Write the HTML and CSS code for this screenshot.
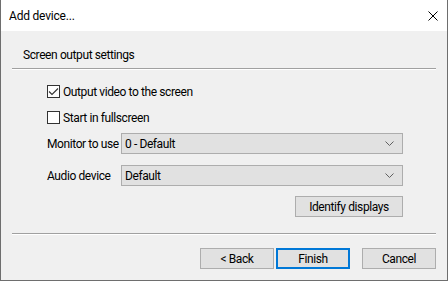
FILE: index.html
```html
<!DOCTYPE html>
<html>
<head>
<meta charset="utf-8">
<link rel="stylesheet" href="styles.css">
</head>
<body>
<div class="window">
  <div class="titlebar">
    <span class="title">Add device...</span>
    <svg class="close" width="10" height="10" viewBox="0 0 10 10"><path d="M0.5 0.5 L9.5 9.5 M9.5 0.5 L0.5 9.5" stroke="#000" stroke-width="1" fill="none"/></svg>
  </div>
  <div class="body">
    <div class="group-title">Screen output settings</div>
    <div class="etched"></div>
    <div class="options">
      <label class="check">
        <span class="box"><svg width="11" height="11" viewBox="0 0 11 11"><path d="M1 5.5 L4 8.5 L10 2.5" stroke="#333" stroke-width="1.1" fill="none"/></svg></span>
        <span>Output video to the screen</span>
      </label>
      <label class="check check-second">
        <span class="box"></span>
        <span>Start in fullscreen</span>
      </label>
      <div class="field field-first">
        <span class="field-label">Monitor to use</span>
        <div class="combo"><span>0 - Default</span><svg width="9" height="5" viewBox="0 0 9 5"><path d="M0.5 0.5 L4.5 4.5 L8.5 0.5" stroke="#606060" fill="none"/></svg></div>
      </div>
      <div class="field field-second">
        <span class="field-label">Audio device</span>
        <div class="combo"><span>Default</span><svg width="9" height="5" viewBox="0 0 9 5"><path d="M0.5 0.5 L4.5 4.5 L8.5 0.5" stroke="#606060" fill="none"/></svg></div>
      </div>
      <div class="inline-actions">
        <button class="btn btn-identify">Identify displays</button>
      </div>
    </div>
    <div class="etched etched-bottom"></div>
    <div class="footer">
      <button class="btn">&lt; Back</button>
      <button class="btn btn-default">Finish</button>
      <button class="btn btn-cancel">Cancel</button>
    </div>
  </div>
</div>
</body>
</html>
```
FILE: styles.css
```css
* { box-sizing: border-box; }
html, body { margin: 0; padding: 0; background: #f0f0f0; }
body {
  font-family: "Roboto", "Noto Sans", sans-serif;
  font-size: 12px;
  letter-spacing: -0.4px;
  color: #000;
}
.window {
  width: 448px;
  height: 281px;
  border: 1px solid #6e6e6e;
  border-top: none;
  display: flex;
  flex-direction: column;
  background: #f0f0f0;
  overflow: hidden;
}
.titlebar {
  height: 31px;
  background: #fff;
  display: flex;
  align-items: center;
  justify-content: space-between;
  padding: 0 9px 0 8px;
  flex: none;
}
.title { line-height: 16px; padding-top: 1px; letter-spacing: -0.2px; }
.close { display: block; }
.body {
  flex: 1;
  padding: 16px 11px 0 11px;
  display: flex;
  flex-direction: column;
}
.group-title {
  line-height: 16px;
  padding-left: 11px;
  height: 16px;
  white-space: nowrap;
}
.etched {
  margin-top: 5px;
  height: 2px;
  flex: none;
  border-top: 1px solid #a0a0a0;
  border-bottom: 1px solid #fff;
}
.options {
  padding: 0 33px 0 35px;
  display: flex;
  flex-direction: column;
}
.check {
  display: flex;
  align-items: center;
  height: 17px;
  margin-top: 13px;
  line-height: 16px;
  white-space: nowrap;
}
.check-second { margin-top: 9px; }
.box {
  width: 13px;
  height: 13px;
  flex: none;
  border: 1px solid #333;
  background: #fff;
  margin-right: 3px;
  display: flex;
  align-items: center;
  justify-content: center;
}
.box svg { display: block; }
.field {
  display: flex;
  align-items: center;
  height: 21px;
}
.field-first { margin-top: 7px; }
.field-second { margin-top: 11px; }
.field-label { width: 74px; flex: none; white-space: nowrap; }
.combo {
  flex: 1;
  height: 21px;
  background: #e1e1e1;
  border: 1px solid #adadad;
  display: flex;
  align-items: center;
  justify-content: space-between;
  padding: 0 8px 0 3px;
}
.combo svg { display: block; }
.inline-actions {
  display: flex;
  justify-content: flex-end;
  margin-top: 10px;
}
.btn {
  font: inherit;
  letter-spacing: inherit;
  color: #000;
  height: 21px;
  width: 74px;
  background: #e1e1e1;
  border: 1px solid #adadad;
  padding: 0;
  margin: 0;
  line-height: 16px;
}
.btn-identify { width: 108px; }
.etched-bottom { margin-top: 16px; }
.footer {
  display: flex;
  justify-content: flex-end;
  margin-top: 13px;
  gap: 2px;
}
.btn-default { border: 2px solid #0078d7; }
.btn-cancel { margin-left: 10px; }
```
